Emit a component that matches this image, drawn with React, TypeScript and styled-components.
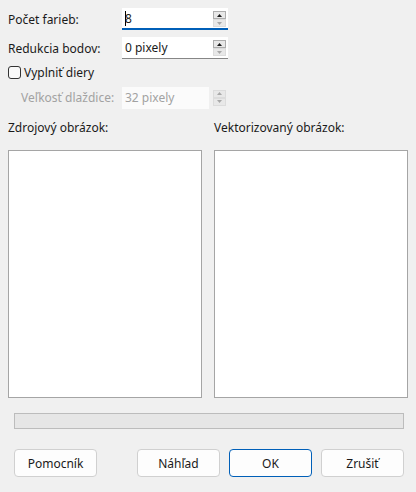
import styled, { createGlobalStyle } from "styled-components";

const Global = createGlobalStyle`
  * { box-sizing: border-box; }
  body {
    margin: 0;
    background: #f0f0f0;
    font-family: "Noto Sans", "Open Sans", sans-serif;
    font-size: 12px;
    color: #1a1a1a;
  }
`;

const Dialog = styled.div`
  width: 416px;
  height: 492px;
  background: #f0f0f0;
  padding: 8px 8px 0 8px;
  display: flex;
  flex-direction: column;
`;

const Row = styled.div<{ $indent?: number; $h: number; $top?: number }>`
  display: flex;
  align-items: center;
  height: ${(p) => p.$h}px;
  margin-top: ${(p) => p.$top ?? 0}px;
  padding-left: ${(p) => p.$indent ?? 0}px;
`;

const Label = styled.span<{ $disabled?: boolean; $w?: number }>`
  width: ${(p) => p.$w ?? 114}px;
  color: ${(p) => (p.$disabled ? "#a2a2a2" : "#1a1a1a")};
`;

const Field = styled.div<{ $focus?: boolean; $w: number; $disabled?: boolean }>`
  position: relative;
  width: ${(p) => p.$w}px;
  height: 22px;
  background: ${(p) => (p.$disabled ? "#fbfbfb" : "#ffffff")};
  border-bottom: ${(p) =>
    p.$disabled ? "none" : p.$focus ? "2px solid #005fb8" : "1px solid #868686"};
  display: flex;
  align-items: center;
  padding-left: 3px;
  color: ${(p) => (p.$disabled ? "#a2a2a2" : "#1a1a1a")};
`;

const Caret = styled.span`
  display: inline-block;
  width: 1px;
  height: 15px;
  background: #000;
  margin-right: -1px;
`;

const Spin = styled.div<{ $outside?: boolean }>`
  position: absolute;
  right: ${(p) => (p.$outside ? -17 : 2)}px;
  top: 3px;
  width: 13px;
  display: flex;
  flex-direction: column;
`;

const SpinBtn = styled.div<{ $active?: boolean }>`
  height: 8px;
  background: #e8e8e8;
  border: 1px solid ${(p) => (p.$active ? "#adadad" : "#dcdcdc")};
  display: flex;
  align-items: center;
  justify-content: center;
  svg { display: block; }
`;

const Arrow = ({ up, color }: { up?: boolean; color: string }) => (
  <svg width="5" height="3" viewBox="0 0 5 3">
    <polygon points={up ? "2.5,0 5,3 0,3" : "0,0 5,0 2.5,3"} fill={color} />
  </svg>
);

const Check = styled.div`
  width: 13px;
  height: 13px;
  border: 1px solid #333;
  border-radius: 3px;
  background: #f9f9f9;
  margin-right: 3px;
`;

const Panes = styled.div`
  display: grid;
  grid-template-columns: 194px 194px;
  column-gap: 12px;
  margin-top: 12px;
`;

const Pane = styled.div`
  display: flex;
  flex-direction: column;
`;

const PaneTitle = styled.div`
  height: 30px;
  line-height: 16px;
`;

const Canvas = styled.div`
  height: 248px;
  background: #ffffff;
  border: 1px solid #a5a5a5;
`;

const Progress = styled.div`
  margin: 15px 4px 0 6px;
  height: 16px;
  background: #e6e6e6;
  border: 1px solid #bcbcbc;
`;

const Buttons = styled.div`
  display: flex;
  margin: 20px 0 0 6px;
  gap: 9px;
`;

const Button = styled.button<{ $primary?: boolean; $gapLeft?: number }>`
  width: 83px;
  height: 28px;
  margin-left: ${(p) => p.$gapLeft ?? 0}px;
  background: #fdfdfd;
  border: 1px solid ${(p) => (p.$primary ? "#005fb8" : "#d0d0d0")};
  border-radius: 4px;
  font-family: inherit;
  font-size: 12px;
  color: #1a1a1a;
  padding: 0;
`;

function SpinField(props: {
  value: React.ReactNode;
  width: number;
  focus?: boolean;
  disabled?: boolean;
}) {
  return (
    <Field $w={props.width} $focus={props.focus} $disabled={props.disabled}>
      {props.value}
      <Spin $outside={props.disabled}>
        <SpinBtn $active={!props.disabled}>
          <Arrow up color={props.disabled ? "#a8a8a8" : "#1a1a1a"} />
        </SpinBtn>
        <SpinBtn>
          <Arrow color="#a8a8a8" />
        </SpinBtn>
      </Spin>
    </Field>
  );
}

export default function App() {
  return (
    <>
      <Global />
      <Dialog>
        <Row $h={22}>
          <Label>Počet farieb:</Label>
          <SpinField
            width={106}
            focus
            value={
              <>
                <Caret />8
              </>
            }
          />
        </Row>
        <Row $h={22} $top={7}>
          <Label>Redukcia bodov:</Label>
          <SpinField width={106} value="0 pixely" />
        </Row>
        <Row $h={14} $top={6}>
          <Check />
          <span>Vyplniť diery</span>
        </Row>
        <Row $h={21} $indent={13} $top={8}>
          <Label $disabled $w={101}>
            Veľkosť dlaždice:
          </Label>
          <SpinField width={87} disabled value="32 pixely" />
        </Row>
        <Panes>
          <Pane>
            <PaneTitle>Zdrojový obrázok:</PaneTitle>
            <Canvas />
          </Pane>
          <Pane>
            <PaneTitle>Vektorizovaný obrázok:</PaneTitle>
            <Canvas />
          </Pane>
        </Panes>
        <Progress />
        <Buttons>
          <Button>Pomocník</Button>
          <Button $gapLeft={31}>Náhľad</Button>
          <Button $primary>OK</Button>
          <Button>Zrušiť</Button>
        </Buttons>
      </Dialog>
    </>
  );
}
